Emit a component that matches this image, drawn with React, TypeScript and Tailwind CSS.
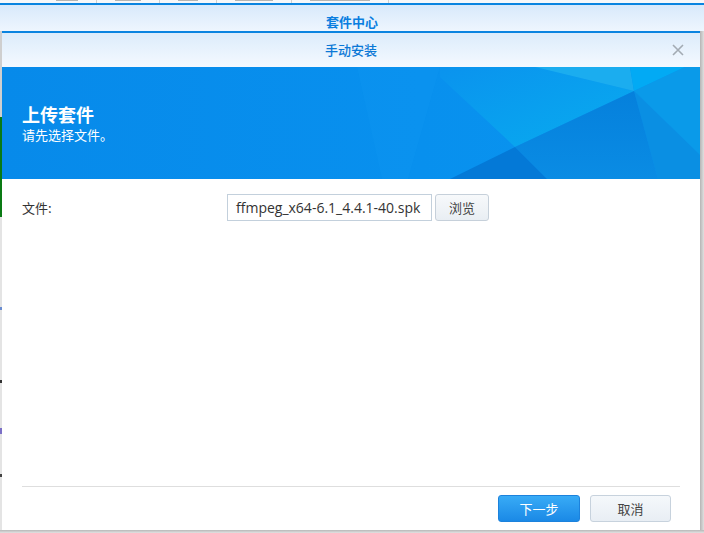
const CJK = "font-['Noto_Sans_CJK_SC',sans-serif]";

// widths of the tab labels of the window behind, only their lower edge shows
const TAB_WIDTHS = [22, 26, 20, 38, 60];

function BannerArt() {
  return (
    <svg className="absolute inset-0" width="698" height="112" viewBox="0 0 698 112" preserveAspectRatio="none">
      <defs>
        <linearGradient id="base" x1="0" y1="0" x2="1" y2="0">
          <stop offset="0" stopColor="#078aea" />
          <stop offset="0.6" stopColor="#0890ee" />
          <stop offset="1" stopColor="#0a96ef" />
        </linearGradient>
        <linearGradient id="mid" x1="0" y1="0" x2="1" y2="1">
          <stop offset="0" stopColor="#0a93ee" />
          <stop offset="1" stopColor="#08acef" />
        </linearGradient>
        <linearGradient id="dark" x1="0" y1="0" x2="0" y2="1">
          <stop offset="0" stopColor="#0580dc" />
          <stop offset="1" stopColor="#0a8ce4" />
        </linearGradient>
      </defs>
      <rect width="698" height="112" fill="url(#base)" />
      <polygon points="355,0 438,0 406,112 380,112" fill="#0b93ef" opacity="0.5" />
      <polygon points="438,0 533,0 632,24 513,80 438,10" fill="url(#mid)" />
      <polygon points="533,0 628,0 632,24" fill="#1badef" />
      <polygon points="628,0 683,0 632,24" fill="#02aaf4" />
      <polygon points="683,0 698,0 698,88 632,24" fill="#0a9ae9" />
      <polygon points="632,24 698,88 698,112 656,112" fill="#0a8fe3" />
      <polygon points="632,24 656,112 545,112 513,80" fill="url(#dark)" />
      <polygon points="513,80 545,112 448,112" fill="#0479d7" />
    </svg>
  );
}

export default function App() {
  return (
    <div className={`w-[704px] h-[533px] overflow-hidden bg-[#d9d9d9] flex flex-col ${CJK}`}>
      {/* background window: tab strip, cut off at the top */}
      <div className="h-[3px] overflow-hidden bg-[#f7f8fa] flex pl-[38px]">
        {TAB_WIDTHS.map((w, i) => (
          <div key={i} className="flex items-start px-[18px] border-r border-[#d0d0d0]">
            <div className="h-[1px] bg-[#b4b4b4]" style={{ width: w }} />
          </div>
        ))}
      </div>
      <div className="h-[2px] bg-[#0a84e0]" />
      <div className="h-[26px] bg-gradient-to-b from-[#d8e9fb] to-[#eef6fe] flex justify-center pt-[8px]">
        <span className="text-[13px] leading-[18px] font-bold text-[#0a7ee0]">套件中心</span>
      </div>

      <div className="flex h-[499px]">
        {/* left edge of the window behind */}
        <div className="w-[2px] bg-[#e4e4e4] flex flex-col">
          <div className="h-[86px] bg-[#cfcfcf]" />
          <div className="h-[100px] bg-[#0a7a14]" />
          <div className="h-[90px]" />
          <div className="h-[3px] bg-[#6a8ccf]" />
          <div className="h-[70px]" />
          <div className="h-[3px] bg-[#333]" />
          <div className="h-[45px]" />
          <div className="h-[6px] bg-[#7b6fc6]" />
          <div className="h-[40px]" />
          <div className="h-[3px] bg-[#444]" />
        </div>

        {/* dialog */}
        <div className="w-[698px] bg-white flex flex-col border-t-2 border-[#0a84e0]">
          <div className="h-[34px] bg-gradient-to-b from-[#dcecfb] to-[#f4f9ff] relative flex items-center justify-center">
            <span className="text-[13px] text-[#0b78d6] font-medium">手动安装</span>
            <svg className="absolute right-[16px] top-[11px]" width="12" height="12" viewBox="0 0 12 12">
              <path d="M1 1 L11 11 M11 1 L1 11" stroke="#a3abb3" strokeWidth="1.6" />
            </svg>
          </div>

          <div className="relative h-[112px] overflow-hidden">
            <BannerArt />
            <div className="relative pl-[20px] pt-[35px] text-white flex flex-col">
              <span className="text-[18px] leading-[24px] font-bold">上传套件</span>
              <span className="text-[13px] leading-[18px]">请先选择文件。</span>
            </div>
          </div>

          <div className="flex-1 px-[20px] pt-[15px]">
            <div className="flex items-center h-[27px]">
              <span className="w-[205px] text-[13px] text-[#333]">文件:</span>
              <div className="w-[205px] h-[27px] border border-[#c3d0dc] flex items-center pl-[8px] text-[14px] text-[#333] font-['Open_Sans',sans-serif]">
                ffmpeg_x64-6.1_4.4.1-40.spk
              </div>
              <button className="ml-[3px] w-[54px] h-[27px] rounded-[3px] border border-[#c6d0da] bg-gradient-to-b from-[#f7f9fb] to-[#e9eef3] text-[13px] text-[#444]">
                浏览
              </button>
            </div>
          </div>

          <div className="mx-[20px] border-t border-[#dedede]" />
          <div className="flex justify-end gap-[10px] pt-[8px] pb-[8px] pr-[29px]">
            <button className="w-[82px] h-[27px] rounded-[3px] border border-[#1c82dc] bg-gradient-to-b from-[#38abf6] to-[#1a89e6] text-[13px] text-white">
              下一步
            </button>
            <button className="w-[81px] h-[27px] rounded-[3px] border border-[#c7d2dd] bg-gradient-to-b from-[#f5f8fb] to-[#e8eef4] text-[13px] text-[#444]">
              取消
            </button>
          </div>
        </div>

        <div className="w-[4px] bg-gradient-to-r from-[#b5b5b5] to-[#e0e0e0]" />
      </div>
      <div className="h-[3px] bg-gradient-to-b from-[#b8b8b8] to-[#e2e2e2]" />
    </div>
  );
}
